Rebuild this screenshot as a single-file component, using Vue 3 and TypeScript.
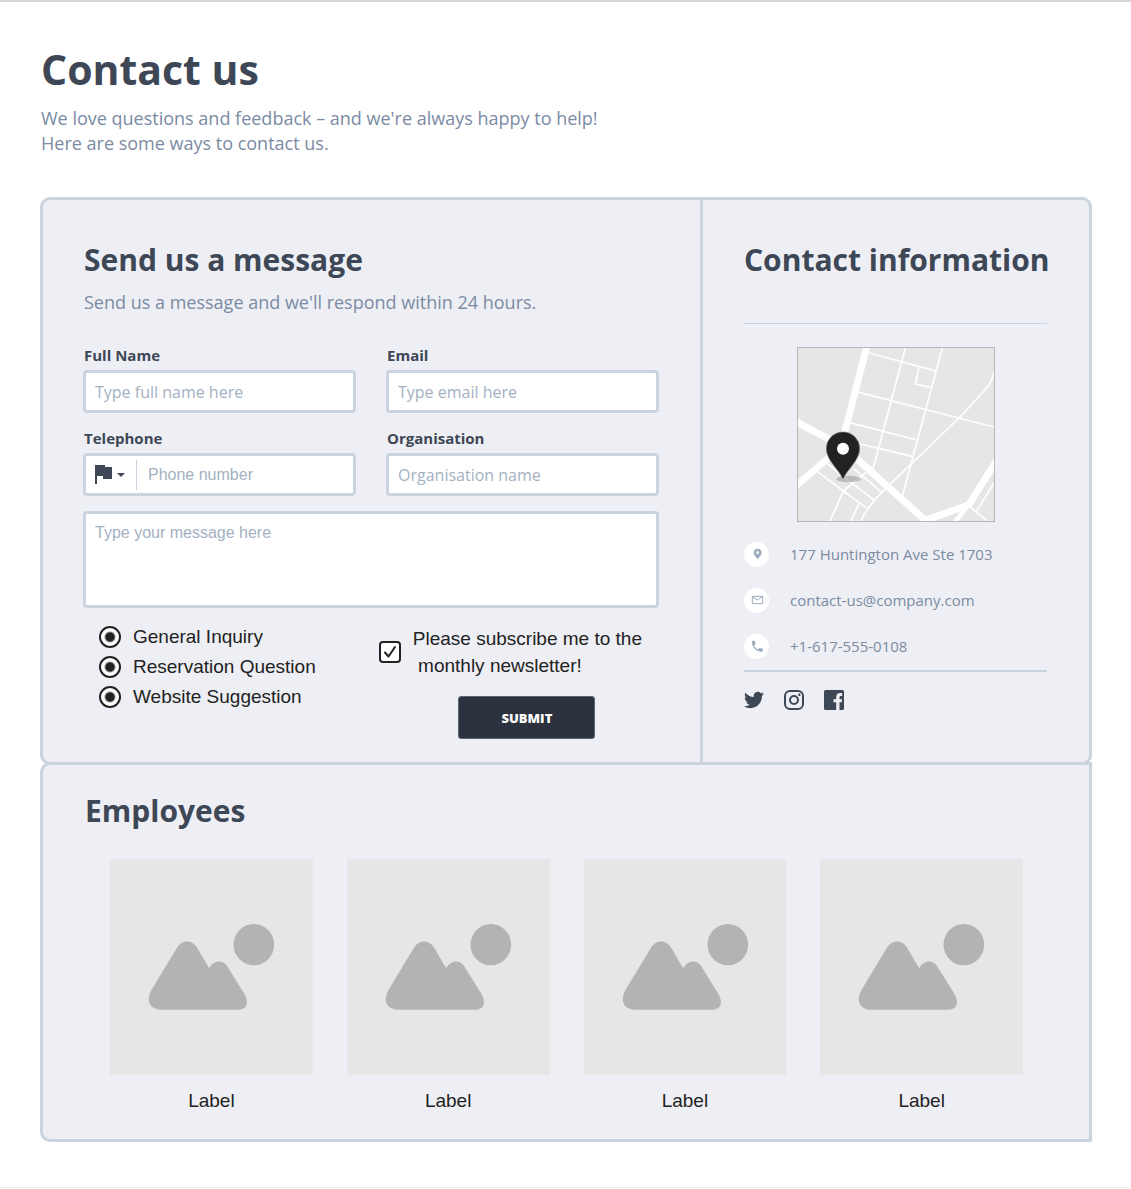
<script setup lang="ts">
import { ref } from 'vue'

interface Topic {
  id: string
  label: string
}

const topics: Topic[] = [
  { id: 'general', label: 'General Inquiry' },
  { id: 'reservation', label: 'Reservation Question' },
  { id: 'website', label: 'Website Suggestion' },
]

const employees: string[] = ['Label', 'Label', 'Label', 'Label']

const fullName = ref('')
const email = ref('')
const phone = ref('')
const organisation = ref('')
const message = ref('')
const subscribe = ref(true)
</script>

<template>
  <main class="page">
    <header class="intro">
      <h1>Contact us</h1>
      <p class="lead">
        We love questions and feedback – and we're always happy to help!<br />
        Here are some ways to contact us.
      </p>
    </header>

    <div class="panel contact">
      <section class="message">
        <h2>Send us a message</h2>
        <p class="lead">Send us a message and we'll respond within 24 hours.</p>

        <form class="form" @submit.prevent>
          <div class="fields">
            <div class="field">
              <label for="full-name">Full Name</label>
              <input id="full-name" v-model="fullName" class="box" type="text" placeholder="Type full name here" />
            </div>
            <div class="field">
              <label for="email">Email</label>
              <input id="email" v-model="email" class="box" type="email" placeholder="Type email here" />
            </div>
            <div class="field">
              <label for="phone">Telephone</label>
              <div class="box phone">
                <div class="country">
                  <svg width="17" height="20" viewBox="0 0 17 20" aria-hidden="true">
                    <path d="M0 0h10v2h7v12H8v-3H2v8H0z" fill="#3d4756" />
                  </svg>
                  <svg width="8" height="4" viewBox="0 0 8 4" aria-hidden="true">
                    <path d="M0 0h8L4 4z" fill="#3d4756" />
                  </svg>
                  <select aria-label="Country code"></select>
                </div>
                <input id="phone" v-model="phone" class="arial" type="tel" placeholder="Phone number" />
              </div>
            </div>
            <div class="field">
              <label for="organisation">Organisation</label>
              <input id="organisation" v-model="organisation" class="box" type="text" placeholder="Organisation name" />
            </div>
          </div>

          <textarea v-model="message" class="box arial" aria-label="Message" placeholder="Type your message here"></textarea>

          <div class="options">
            <div class="topics">
              <label v-for="topic in topics" :key="topic.id" class="choice">
                <input type="radio" :name="topic.id" :value="topic.id" checked />
                {{ topic.label }}
              </label>
            </div>
            <div class="finish">
              <label class="choice subscribe">
                <span class="tick">
                  <input v-model="subscribe" type="checkbox" />
                  <svg v-if="subscribe" viewBox="0 0 22 22" aria-hidden="true">
                    <path d="M6 11.5l3.5 4L16 6" fill="none" stroke="#222" stroke-width="2" stroke-linecap="round" stroke-linejoin="round" />
                  </svg>
                </span>
                <span>Please subscribe me to the<br />&nbsp;monthly newsletter!</span>
              </label>
              <button type="submit" class="submit">SUBMIT</button>
            </div>
          </div>
        </form>
      </section>

      <aside class="info">
        <h2>Contact information</h2>
        <hr />
        <svg class="map" viewBox="54 39 588 519" preserveAspectRatio="none" role="img" aria-label="Map">
          <rect x="54" y="39" width="588" height="519" fill="#e6e6e6" />
          <g fill="none" stroke="#fff" stroke-width="5">
            <path d="M268 54L468 108M376 39L279 402M487 39L368 480M417 97L406 147L455 158" />
            <path d="M236 172L642 276M210 263L410 315M240 327L397 364" />
            <path d="M642 110Q638 140 612 168L546 240L395 386L328 450L290 488Q258 525 243 558" />
            <path d="M108 407L190 468L262 520M140 384L190 425L282 495M220 400L306 472M190 468L150 558M190 468L262 410M236 506L213 558" />
            <path d="M590 528L642 444M570 516L620 556" />
          </g>
          <g fill="none" stroke="#fff" stroke-linejoin="round">
            <path d="M260 36L192 300" stroke-width="21" />
            <path d="M44 258L190 335L436 556L566 510L650 376" stroke-width="21" />
            <path d="M46 454L160 356" stroke-width="20" />
            <path d="M566 510L526 560" stroke-width="14" />
          </g>
          <ellipse cx="206" cy="432" rx="37" ry="10" fill="#8c8c8c" opacity="0.5" />
          <path
            fill="#222"
            stroke="#777"
            stroke-width="2"
            d="M189 432C174 400 139 376 139 340a50 49 0 0 1 100 0c0 36-35 60-50 92z"
          />
          <circle cx="189" cy="341" r="18" fill="#fff" />
        </svg>

        <address>
          <div class="line">
            <span class="dot">
              <svg width="24" height="24" viewBox="0 0 72 72" aria-hidden="true">
                <path
                  fill="#9dacbe"
                  fill-rule="evenodd"
                  d="M38 52C33 44 26 39 26 32a12 12 0 0 1 24 0c0 7-7 12-12 20zM38 28a4 4 0 1 0 0 8 4 4 0 0 0 0-8z"
                />
              </svg>
            </span>
            177 Huntington Ave Ste 1703
          </div>
          <div class="line">
            <span class="dot">
              <svg width="24" height="24" viewBox="0 0 72 72" aria-hidden="true">
                <path fill="none" stroke="#9dacbe" stroke-width="3" d="M22 25h31v22H22zM23 27l14 9 15-9" />
              </svg>
            </span>
            <a href="mailto:contact-us@company.com">contact-us@company.com</a>
          </div>
          <div class="line">
            <span class="dot">
              <svg width="24" height="24" viewBox="0 0 72 72" aria-hidden="true">
                <g transform="translate(15 15) scale(1.82)">
                  <path
                    fill="#9dacbe"
                    d="M6.6 10.8c1.4 2.8 3.8 5.1 6.6 6.6l2.2-2.2c.3-.3.7-.4 1-.2 1.1.4 2.3.6 3.6.6.6 0 1 .4 1 1V20c0 .6-.4 1-1 1C10.600 21 3 13.400 3 4c0-.6.500-1 1-1h3.500c.6 0 1 .4 1 1 0 1.300.2 2.500.6 3.600.1.300 0 .7-.2 1z"
                  />
                </g>
              </svg>
            </span>
            <a href="tel:+16175550108">+1-617-555-0108</a>
          </div>
        </address>
        <hr class="thick" />
        <nav class="social" aria-label="Social media">
          <a href="#twitter" aria-label="Twitter">
            <svg viewBox="0 0 24 24" fill="#3d4756">
              <path
                d="M23.950 4.570a10 10 0 0 1-2.820.770 4.960 4.960 0 0 0 2.160-2.720c-.95.550-2 .950-3.130 1.180a4.920 4.920 0 0 0-8.380 4.480C7.690 8.090 4.070 6.130 1.640 3.160a4.900 4.900 0 0 0-.67 2.480c0 1.710.87 3.210 2.190 4.100a4.900 4.900 0 0 1-2.230-.62v.06a4.920 4.920 0 0 0 3.950 4.830 5 5 0 0 1-2.210.08 4.940 4.940 0 0 0 4.600 3.420A9.870 9.870 0 0 1 0 19.540a14 14 0 0 0 7.550 2.210c9.050 0 14-7.500 14-13.980 0-.21 0-.42-.02-.63a9.940 9.940 0 0 0 2.460-2.550z"
              />
            </svg>
          </a>
          <a href="#instagram" aria-label="Instagram">
            <svg viewBox="0 0 20 20" fill="none" stroke="#3d4756" stroke-width="2">
              <rect x="1" y="1" width="18" height="18" rx="5" />
              <circle cx="10" cy="10" r="4" />
              <circle cx="15.300" cy="4.700" r="1.200" fill="#3d4756" stroke="none" />
            </svg>
          </a>
          <a href="#facebook" aria-label="Facebook">
            <svg viewBox="0 0 20 20" fill="#3d4756">
              <path
                d="M1.500 0h17A1.500 1.500 0 0 1 20 1.500v17a1.500 1.500 0 0 1-1.500 1.500H15.500v-7.700h2.200l.4-3h-2.600V7.500c0-.9.300-1.500 1.500-1.500h1.200V3.200c-.3 0-1-.1-2-.1-2.400 0-4 1.400-4 4v2.200H9.500v3h2.700V20H1.500A1.500 1.500 0 0 1 0 18.500v-17A1.500 1.500 0 0 1 1.500 0z"
              />
            </svg>
          </a>
        </nav>
      </aside>
    </div>

    <section class="panel employees">
      <h2>Employees</h2>
      <div class="people">
        <figure v-for="(name, index) in employees" :key="index">
          <svg viewBox="240 328 609 649" role="img" aria-label="Photo placeholder">
            <rect x="240" y="328" width="609" height="649" fill="#e6e6e6" />
            <path
              fill="#b3b3b3"
              d="M400 781C352 781 350 748 364 722L438 600C455 568 488 568 505 600L528 640L538 656C552 630 580 630 592 650L643 732C658 758 654 781 622 781z"
            />
            <ellipse cx="672" cy="585" rx="61" ry="62" fill="#b3b3b3" />
          </svg>
          <figcaption>{{ name }}</figcaption>
        </figure>
      </div>
    </section>
  </main>
</template>

<style>
body {
  margin: 0;
  background: #fff;
}
</style>

<style scoped>
* {
  box-sizing: border-box;
}

.page {
  padding: 40px 39px 45px 40px;
  border-top: 2px solid #d6d6d6;
  border-bottom: 1px solid #eeeeef;
  font-family: 'Open Sans', 'Noto Sans', sans-serif;
  color: #3d4756;
}

h1,
h2,
p,
figure {
  margin: 0;
}

h1 {
  font-size: 41px;
  line-height: 54px;
  font-weight: 700;
}

h2 {
  font-size: 30px;
  line-height: 40px;
  font-weight: 700;
}

.lead {
  margin-top: 10px;
  font-size: 18px;
  line-height: 25px;
  color: #7b8ba3;
}

.intro {
  padding-left: 1px;
  margin-bottom: 41px;
}

.panel {
  border: 3px solid #cad4de;
  background: #eeeff4;
}

.contact {
  display: grid;
  grid-template-columns: minmax(0, 657fr) minmax(0, 389fr);
  border-radius: 10px;
}

.message {
  padding: 40px 41px 23px 40px;
}

.message > h2,
.message > .lead {
  padding-left: 1px;
}

.form {
  margin-top: 30px;
}

.fields {
  display: grid;
  grid-template-columns: repeat(2, minmax(0, 1fr));
  gap: 15px 30px;
}

.field {
  display: flex;
  flex-direction: column;
}

.field > label {
  padding-left: 1px;
  font-size: 15px;
  line-height: 20px;
  margin-bottom: 5px;
  font-weight: 700;
}

.box {
  width: 100%;
  height: 43px;
  padding: 0 9px;
  border: 3px solid #cad4de;
  border-radius: 4px;
  background: #fff;
  font-family: inherit;
  font-size: 16px;
  color: #3d4756;
}

.box::placeholder,
.phone input::placeholder {
  color: #a3b1c2;
  opacity: 1;
}

.box.arial,
.phone .arial {
  font-family: 'Liberation Sans', Arial, sans-serif;
}

.phone {
  display: flex;
  align-items: center;
}

.country {
  position: relative;
  display: flex;
  align-items: center;
  gap: 5px;
  flex: none;
  width: 42px;
  height: 30px;
  border-right: 1px solid #cad4de;
}

.country select {
  position: absolute;
  inset: 0;
  width: 100%;
  opacity: 0;
}

.phone input {
  flex: 1;
  min-width: 0;
  padding: 0 0 0 11px;
  border: 0;
  font-size: 16px;
  background: none;
}

textarea.box {
  display: block;
  height: 97px;
  margin-top: 15px;
  padding: 9px;
  line-height: 20px;
  resize: none;
}

.options {
  display: flex;
  justify-content: space-between;
  margin-top: 14px;
  padding: 0 17px 0 16px;
}

.choice {
  display: flex;
  align-items: center;
  gap: 12px;
  font-family: 'Liberation Sans', Arial, sans-serif;
  font-size: 19px;
  line-height: 30px;
  color: #222;
}

.choice input {
  appearance: none;
  flex: none;
  width: 22px;
  height: 22px;
  margin: 0;
  border: 2px solid #222;
  background: #fff;
}

.choice input[type='radio'] {
  border-radius: 50%;
  background: radial-gradient(circle, #222 4px, #fff 6px);
}

.finish {
  display: flex;
  flex-direction: column;
  align-items: center;
}

.subscribe {
  line-height: 27px;
  margin-top: 3px;
}

.tick {
  position: relative;
  display: flex;
}

.tick input {
  border-radius: 4px;
}

.tick svg {
  position: absolute;
  inset: 0;
}

.submit {
  width: 137px;
  height: 43px;
  margin-top: 17px;
  margin-left: 33px;
  border: 1px solid #5b6470;
  border-radius: 3px;
  background: #2b323d;
  color: #fff;
  font-family: inherit;
  font-size: 13px;
  font-weight: 800;
}

.info {
  padding: 40px 42px 40px 41px;
  border-left: 3px solid #cad4de;
}

.info h2 {
  white-space: nowrap;
}

hr {
  height: 1px;
  margin: 43px 0 23px;
  border: 0;
  background: #cad4de;
}

hr.thick {
  height: 2px;
  margin: 1px 0 18px;
}

.map {
  display: block;
  width: 198px;
  height: 175px;
  margin: 0 auto;
  border: 1px solid #b8b8b8;
}

address {
  margin-top: 9px;
  font-style: normal;
}

.line {
  display: flex;
  align-items: center;
  gap: 21px;
  height: 46px;
  font-size: 15px;
  color: #7b8ba3;
}

.line a {
  color: inherit;
  text-decoration: none;
}

.dot {
  display: flex;
  justify-content: center;
  align-items: center;
  width: 25px;
  height: 25px;
  border-radius: 50%;
  background: #fff;
}

.social {
  display: flex;
  gap: 20px;
}

.social a,
.social svg {
  display: block;
  width: 20px;
  height: 20px;
}

.employees {
  margin-top: -3px;
  padding: 26px 66px 23px 67px;
  border-radius: 10px 0 0 10px;
}

.employees h2 {
  margin-left: -25px;
}

.people {
  display: grid;
  grid-template-columns: repeat(4, 1fr);
  gap: 34px;
  margin-top: 28px;
}

.people svg {
  display: block;
  width: 100%;
}

figcaption {
  margin-top: 11px;
  font-family: 'Liberation Sans', Arial, sans-serif;
  font-size: 19px;
  line-height: 30px;
  text-align: center;
  color: #222;
}
</style>
